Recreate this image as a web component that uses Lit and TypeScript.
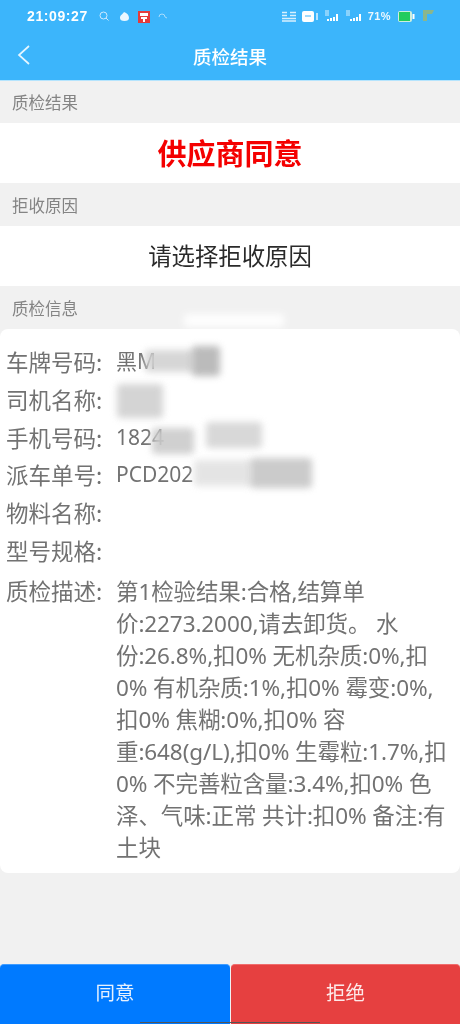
import { LitElement, html, css, svg } from "lit";
import { customElement } from "lit/decorators.js";

const rows: [string, string][] = [
  ["车牌号码:", "黑M"],
  ["司机名称:", ""],
  ["手机号码:", "1824"],
  ["派车单号:", "PCD202"],
  ["物料名称:", ""],
  ["型号规格:", ""],
];
const desc = ["第1检验结果:合格,结算单", "价:2273.2000,请去卸货。 水", "份:26.8%,扣0% 无机杂质:0%,扣", "0% 有机杂质:1%,扣0% 霉变:0%,", "扣0% 焦糊:0%,扣0% 容", "重:648(g/L),扣0% 生霉粒:1.7%,扣", "0% 不完善粒含量:3.4%,扣0% 色", "泽、气味:正常 共计:扣0% 备注:有", "土块"];
const smudges: [number, number, number, number, string][] = [
  [184, 314, 100, 13, "#ffffff"],
  [145, 350, 50, 22, "#d2d2d2"], [192, 346, 28, 30, "#b4b4b4"],
  [117, 384, 46, 34, "#d0d0d0"],
  [152, 428, 42, 26, "#cbcbcb"], [206, 422, 56, 26, "#d4d4d4"],
  [194, 460, 58, 26, "#e2e2e2"], [250, 458, 62, 30, "#c6c6c6"],
];

@customElement("app-root")
export class AppRoot extends LitElement {
  static styles = css`
    :host { display: flex; flex-direction: column; width: 460px; height: 1024px; position: relative; overflow: hidden; background: #f1f1f1; font-family: "Noto Sans CJK SC", "Noto Sans", sans-serif; color: #727272; filter: blur(.45px); }
    .top { background: #3cb5fb; height: 80px; border-bottom: 1px solid #b5e4fd; display: flex; flex-direction: column; color: #fff; }
    .status { height: 32px; display: flex; align-items: center; padding: 0 26px 0 27px; gap: 5px; }
    .time { font: 700 14px "Liberation Sans", sans-serif; letter-spacing: .6px; margin-right: 4px; }
    .spacer { flex: 1; }
    .pct { font: 700 11px "Liberation Sans", sans-serif; letter-spacing: .4px; opacity: .9; }
    .nav { height: 48px; display: flex; align-items: center; justify-content: center; position: relative; font-size: 18.5px; font-weight: 500; line-height: 1; }
    .back { position: absolute; left: 17px; top: 12px; }
    .label { height: 43px; display: flex; align-items: center; padding-left: 12px; font-size: 16.5px; color: #848484; }
    .first { height: 42px; }
    .value { background: #fff; height: 60px; display: flex; align-items: center; justify-content: center; padding-bottom: 2px; box-sizing: border-box; }
    .status-text { color: #f40000; font-size: 29px; font-weight: 700; }
    .reason { font-size: 23.4px; color: #2a2a2a; }
    .card { background: #fff; border-radius: 8px; height: 544px; box-sizing: border-box; padding: 14px 0 0 6px; font-size: 22.5px; }
    .row { display: grid; grid-template-columns: 110px 1fr; height: 37.8px; line-height: 37.8px; white-space: nowrap; }
    .row .v { font-family: "Noto Sans", "Noto Sans CJK SC", sans-serif; font-size: 21px; }
    .desc { display: grid; grid-template-columns: 110px 1fr; margin-top: 6px; line-height: 32px; white-space: nowrap; }
    .dk { line-height: 28px; }
    .t { font-family: "Noto Sans", "Noto Sans CJK SC", sans-serif; font-size: 22.5px; letter-spacing: -.1px; }
    .smudge { position: absolute; filter: blur(3.5px); border-radius: 4px; opacity: .9; }
    .grow { flex: 1; }
    .actions { height: 60px; display: grid; grid-template-columns: 230px 229px; gap: 1px; }
    .btn { display: flex; align-items: center; justify-content: center; color: #e6f1ff; font-size: 19.5px; border-radius: 4px 4px 0 0; padding-bottom: 7px; box-sizing: border-box; }
    .agree { background: #007aff; border-top: 1px solid #3f9cff; }
    .reject { background: #e64040; border-top: 1px solid #f06c6c; color: #fde9e9; }
    .home { position: absolute; left: 140px; bottom: 1px; width: 180px; height: 1px; background: #555; }
  `;

  private statusIcons() {
    return svg`<svg width="12" height="12" viewBox="0 0 12 12" style="margin-left:1px"><circle cx="5.5" cy="5.5" r="3.5" fill="none" stroke="#cdeaff" stroke-width="1"/><path d="M8 8l2.5 2.5" stroke="#cdeaff"/></svg>
    <svg width="13" height="13" viewBox="0 0 13 13" style="margin-left:3px"><path d="M2 8c0-3 2-3 4-6 3 1 5 3 5 6a4.5 3 0 0 1-9 0z" fill="#eaf7ff"/></svg>
    <svg width="12" height="13" viewBox="0 0 12 13" style="margin-left:2px"><rect x="0" y="1" width="12" height="12" fill="#e33b3b"/><rect x="2" y="3" width="8" height="3" fill="#fff"/><rect x="3" y="7" width="6" height="2" fill="#fff"/><rect x="5" y="9" width="2" height="3" fill="#fff"/></svg>
    <svg width="10" height="6" viewBox="0 0 10 6" style="margin-left:3px"><path d="M1 4a3 3 0 0 1 6 0l2 1" fill="none" stroke="#a9dcfb"/></svg>`;
  }

  private signal(w: number) {
    return svg`<svg width="${w}" height="12" viewBox="0 0 ${w} 12"><path d="M1 1h4M1 3h4M1 5h4" stroke="#fff" stroke-width="1" opacity=".8"/><path d="M${w - 12} 11V9M${w - 9} 11V8M${w - 6} 11V7M${w - 3} 11V4" stroke="#fff" stroke-width="2"/></svg>`;
  }

  render() {
    return html`
      <div class="top">
        <div class="status">
          <span class="time">21:09:27</span>
          ${this.statusIcons()}
          <span class="spacer"></span>
          <svg width="15" height="11" viewBox="0 0 15 11"><path d="M0 1.5h5M8 1.5h6M0 4.5h5M8 4.5h6M0 7.5h14M0 10h14" stroke="#fff" stroke-width="1.5" opacity=".8"/></svg>
          <svg width="17" height="11" viewBox="0 0 17 11"><rect x="0" y="0" width="12" height="11" rx="2" fill="#fff"/><path d="M3 5h6" stroke="#3cb5fb"/><path d="M15 2v7" stroke="#fff" stroke-width="1.6" opacity=".8"/></svg>
          ${this.signal(16)}
          ${this.signal(18)}
          <span class="pct">71%</span>
          <svg width="17" height="11" viewBox="0 0 17 11" style="margin-left:2px"><rect x="0" y="0" width="14" height="11" rx="2" fill="#cdeedd"/><rect x="1" y="1" width="11" height="9" fill="#22cc5e"/><path d="M15.5 3v5" stroke="#fff" stroke-width="2"/></svg>
          <svg width="11" height="12" viewBox="0 0 11 12" style="margin-left:3px"><path d="M0 0h11L9 4H4v7H0z" fill="#8ab68c"/></svg>
        </div>
        <div class="nav">
          <svg class="back" width="14" height="22" viewBox="0 0 14 22"><path d="M12 2L2 11l10 9" fill="none" stroke="#e6f6ff" stroke-width="1.7"/></svg>
          质检结果
        </div>
      </div>
      <div class="label first">质检结果</div>
      <div class="value status-text">供应商同意</div>
      <div class="label">拒收原因</div>
      <div class="value reason">请选择拒收原因</div>
      <div class="label">质检信息</div>
      <div class="card">
        ${rows.map(([k, v]) => html`<div class="row"><span>${k}</span><span class="v">${v}</span></div>`)}
        <div class="desc"><span class="dk">质检描述:</span><div class="t">${desc.map((l) => html`<div>${l}</div>`)}</div></div>
      </div>
      <div class="grow"></div>
      <div class="actions">
        <div class="btn agree">同意</div>
        <div class="btn reject">拒绝</div>
      </div>
      <div class="home"></div>
      ${smudges.map(([x, y, w, h, c]) => html`<div class="smudge" style="left:${x}px;top:${y}px;width:${w}px;height:${h}px;background:${c}"></div>`)}
    `;
  }
}
